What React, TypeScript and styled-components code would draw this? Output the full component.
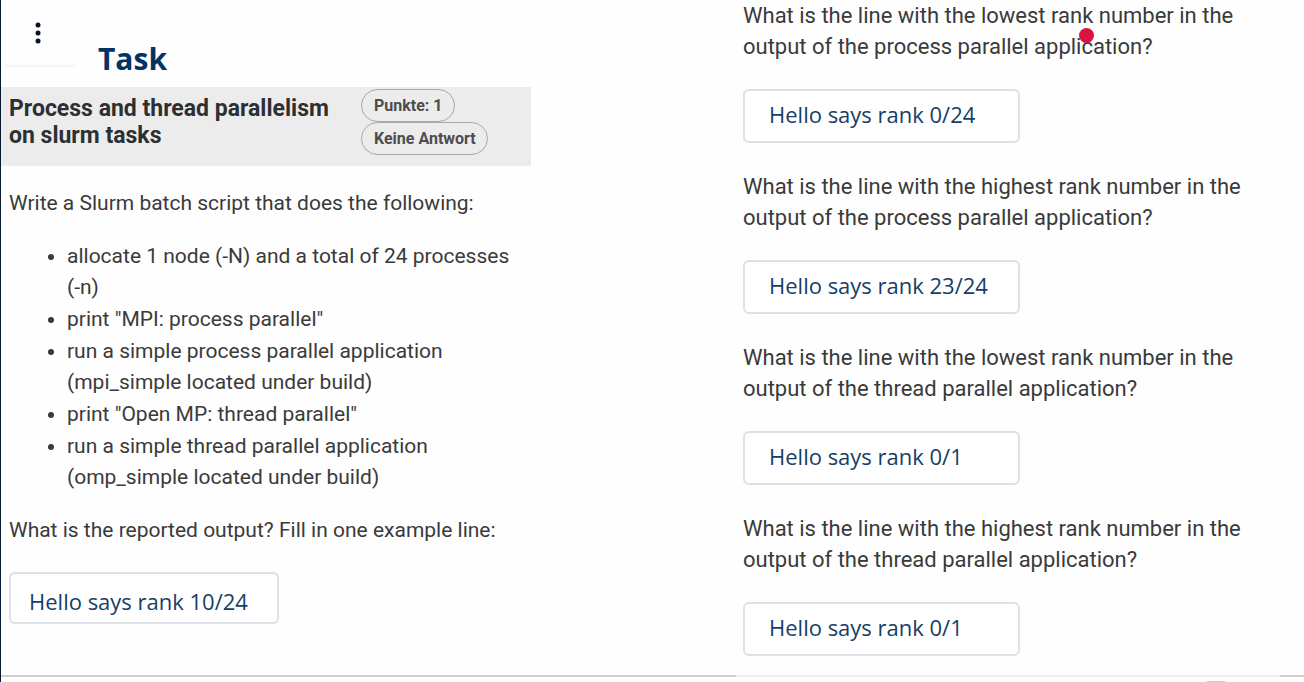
import React from "react";
import styled, { createGlobalStyle } from "styled-components";

const GlobalStyle = createGlobalStyle`
  * { box-sizing: border-box; }
  body {
    margin: 0;
    background: #fefefe;
    color: #3a3a3a;
    font-family: Roboto, "Liberation Sans", sans-serif;
    font-size: 22px;
    line-height: 31px;
  }
`;

const Page = styled.main`
  display: flex;
  min-height: 100vh;
  border-left: 1px solid #0a1a33;
  overflow: hidden;
`;

const TaskColumn = styled.section`
  flex: 0 0 735px;
  display: flex;
  flex-direction: column;
  font-size: 21px;
`;

const AnswerColumn = styled.section`
  flex: 1;
  min-width: 0;
  display: flex;
  flex-direction: column;
`;

const TopBar = styled.header`
  display: flex;
  height: 87px;
  padding-left: 4px;
`;

const MenuButton = styled.button`
  width: 70px;
  height: 67px;
  padding: 3px 4px 0 0;
  border: 0;
  border-bottom: 2px solid #f5f5f5;
  background: none;
  color: #07122b;
`;

const Heading = styled.h1`
  margin: 0;
  padding: 40px 0 0 23px;
  color: #003366;
  font-family: "Open Sans", "Noto Sans", sans-serif;
  font-size: 30px;
  line-height: 38px;
  font-weight: 700;
`;

const TitleBar = styled.div`
  display: flex;
  width: 530px;
  height: 79px;
  padding: 2px 0 0 8px;
  background: #ececec;
`;

const Title = styled.h2`
  width: 352px;
  margin: 0;
  padding: 6px 24px 0 0;
  color: #2d3033;
  font-size: 23px;
  line-height: 27px;
  font-weight: 700;
`;

const Badges = styled.div`
  display: flex;
  flex-direction: column;
  align-items: flex-start;
`;

const Badge = styled.span`
  height: 33px;
  padding: 0 11px 0 12px;
  border: 1px solid #a8a8a8;
  border-radius: 17px;
  color: #4d4d4d;
  font-size: 16px;
  line-height: 32px;
  font-weight: 700;
`;

const TaskBody = styled.div`
  padding: 22px 204px 0 8px;
`;

const Paragraph = styled.p`
  margin: 0;
`;

const StepList = styled.ul`
  display: flex;
  flex-direction: column;
  gap: 1px;
  margin: 22px 0;
  padding-left: 58px;
`;

const Step = styled.li`
  padding-right: 8px;
`;

const Question = styled.label`
  display: block;
`;

const Answer = styled.input<{ $wide?: boolean }>`
  display: block;
  width: ${(p) => (p.$wide ? 277 : 270)}px;
  height: ${(p) => (p.$wide ? 54 : 52)}px;
  margin-top: ${(p) => (p.$wide ? 27 : 26)}px;
  padding: ${(p) => (p.$wide ? "0 0 4px 24px" : "6px 0 0 18px")};
  border: 2px solid #dde0e6;
  border-radius: 6px;
  background: #fff;
  color: #163e68;
  font-family: "Open Sans", "Noto Sans", sans-serif;
  font-size: 22px;
`;

const QuestionList = styled.div`
  display: flex;
  flex-direction: column;
  gap: 28px;
  padding: 0 40px 0 7px;
`;

const QuestionBlock = styled.div`
  position: relative;
`;

const Pointer = styled.span`
  position: absolute;
  top: 28px;
  left: 336px;
  width: 15px;
  height: 15px;
  border-radius: 50%;
  background: #d9143f;
`;

const LeftRule = styled.div`
  height: 7px;
  margin-top: 51px;
  border-top: 2px solid #cfcfcf;
`;

const RightRule = styled.div`
  display: flex;
  justify-content: flex-end;
  height: 7px;
  margin-top: 19px;
  border-top: 2px solid #f1f1f1;
`;

const RuleEnd = styled.span`
  width: 24px;
  height: 2px;
  margin-top: -2px;
  background: #cfcfcf;
`;

const Peek = styled.span`
  width: 20px;
  height: 2px;
  margin: 4px 54px 0 0;
  border-radius: 10px 10px 0 0;
  background: #d3c6bf;
`;

const steps = [
  ["allocate 1 node (-N) and a total of 24 processes", "(-n)"],
  ['print "MPI: process parallel"'],
  ["run a simple process parallel application", "(mpi_simple located under build)"],
  ['print "Open MP: thread parallel"'],
  ["run a simple thread parallel application", "(omp_simple located under build)"],
];

const questions = [
  { rank: "lowest", kind: "process", answer: "Hello says rank 0/24" },
  { rank: "highest", kind: "process", answer: "Hello says rank 23/24" },
  { rank: "lowest", kind: "thread", answer: "Hello says rank 0/1" },
  { rank: "highest", kind: "thread", answer: "Hello says rank 0/1" },
];

export default function App() {
  return (
    <>
      <GlobalStyle />
      <Page>
        <TaskColumn>
          <TopBar>
            <MenuButton aria-label="Menu">
              <svg width="6" height="22" viewBox="0 0 6 22" fill="currentColor">
                <circle cx="3" cy="3" r="2.5" />
                <circle cx="3" cy="11" r="2.5" />
                <circle cx="3" cy="19" r="2.5" />
              </svg>
            </MenuButton>
            <Heading>Task</Heading>
          </TopBar>
          <TitleBar>
            <Title>
              Process and thread parallelism
              <br />
              on slurm tasks
            </Title>
            <Badges>
              <Badge>Punkte: 1</Badge>
              <Badge>Keine Antwort</Badge>
            </Badges>
          </TitleBar>
          <TaskBody>
            <Paragraph>Write a Slurm batch script that does the following:</Paragraph>
            <StepList>
              {steps.map(([first, second]) => (
                <Step key={first}>
                  {first}
                  {second && <br />}
                  {second}
                </Step>
              ))}
            </StepList>
            <Question htmlFor="example">
              What is the reported output? Fill in one example line:
            </Question>
            <Answer id="example" defaultValue="Hello says rank 10/24" />
          </TaskBody>
          <LeftRule />
        </TaskColumn>
        <AnswerColumn>
          <QuestionList>
            {questions.map((q, i) => (
              <QuestionBlock key={i}>
                <Question htmlFor={`answer-${i}`}>
                  {`What is the line with the ${q.rank} rank number in the`}
                  <br />
                  {`output of the ${q.kind} parallel application?`}
                </Question>
                <Answer $wide id={`answer-${i}`} defaultValue={q.answer} />
                {i === 0 && <Pointer />}
              </QuestionBlock>
            ))}
          </QuestionList>
          <RightRule>
            <Peek />
            <RuleEnd />
          </RightRule>
        </AnswerColumn>
      </Page>
    </>
  );
}
